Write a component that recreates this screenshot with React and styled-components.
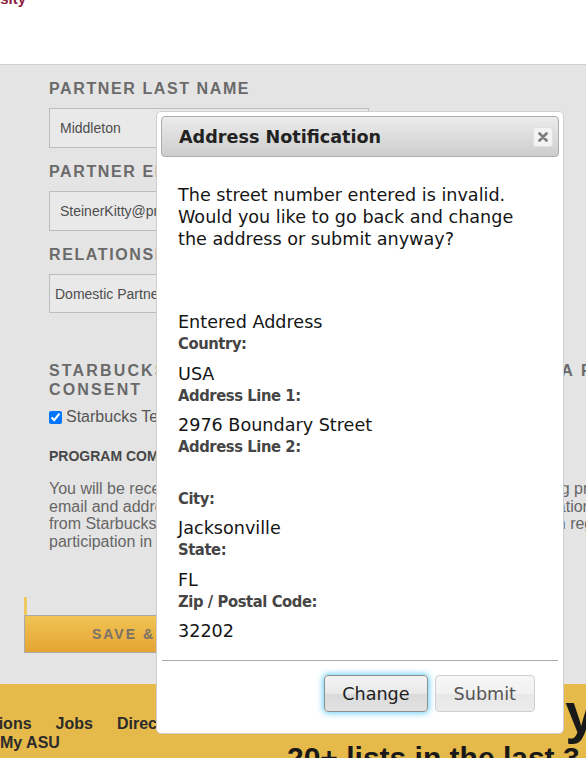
import React from "react";
import styled, { createGlobalStyle } from "styled-components";

const GlobalStyle = createGlobalStyle`
  html, body { margin: 0; padding: 0; background: #fff; overflow: hidden; }
  * { box-sizing: border-box; }
`;

const Page = styled.div`
  position: relative;
  width: 586px;
  height: 758px;
  overflow: hidden;
  font-family: "Liberation Sans", Arial, sans-serif;
`;

const Header = styled.header`
  height: 65px;
  background: #fff;
  border-bottom: 1px solid #cfcfcf;
`;

const Logo = styled.div`
  display: flex;
  justify-content: flex-end;
  width: 26px;
  height: 7px;
  overflow: hidden;
  color: #8c1d40;
  font: bold 15px/15px "Liberation Sans", Arial, sans-serif;
  white-space: nowrap;

  span {
    margin-top: -9px;
  }
`;

const Main = styled.main`
  height: 619px;
  background: #e4e4e4;
  padding-top: 14px;
`;

const Form = styled.div`
  width: 760px;
  margin-left: 49px;
`;

const Field = styled.div`
  display: flex;
  flex-direction: column;
  gap: 9px;
  margin-bottom: 14px;
`;

const FieldLabel = styled.div`
  max-width: ${(p) => p.$max || 700}px;
  font-size: 16px;
  font-weight: bold;
  line-height: ${(p) => p.$lh || 20}px;
  letter-spacing: ${(p) => p.$ls || 1.6}px;
  color: #6a6a6a;
  text-transform: uppercase;
`;

const TextInput = styled.input`
  width: 320px;
  height: 40px;
  margin: 0;
  padding: 0 10px;
  border: 1px solid #bdbdbd;
  background: #e9e9e9;
  font: 14px "Liberation Sans", Arial, sans-serif;
  color: #4d4d4d;
  outline: none;
`;

const SelectBox = styled.select`
  appearance: none;
  width: 320px;
  height: 39px;
  margin: 0;
  padding: 0 5px;
  border: 1px solid #bdbdbd;
  background: #e9e9e9;
  font: 14px "Liberation Sans", Arial, sans-serif;
  color: #4d4d4d;
`;

const Consent = styled.section`
  margin-top: 48px;
`;

const CheckRow = styled.label`
  display: flex;
  align-items: center;
  gap: 4px;
  margin-top: 8px;
  font-size: 16px;
  line-height: 20px;
  color: #555;
  white-space: nowrap;

  input {
    width: 13px;
    height: 13px;
    margin: 0;
  }
`;

const SubHead = styled.div`
  margin-top: 20px;
  font-size: 14px;
  font-weight: bold;
  line-height: 18px;
  color: #474747;
`;

const Para = styled.p`
  margin: 15px 0 0;
  font-size: 16px;
  line-height: 17.5px;
  color: #666;
  white-space: nowrap;
`;

const Actions = styled.div`
  margin: 47px 0 0 24px;
`;

const SaveAccent = styled.div`
  width: 3px;
  height: 18px;
  background: #efc862;
`;

const SaveButton = styled.button`
  display: block;
  width: 300px;
  height: 38px;
  margin: 0;
  border: 1px solid #a9a9a9;
  background: linear-gradient(#f0c453, #e5a434);
  font: bold 14px "Liberation Sans", Arial, sans-serif;
  letter-spacing: 2px;
  color: #7a7268;
  text-indent: -6px;
`;

const Footer = styled.footer`
  display: flex;
  height: 74px;
  background: #e6ba4a;
  overflow: hidden;
`;

const FooterNav = styled.nav`
  flex: none;
  width: 287px;
  padding-top: 30px;
`;

const NavLine = styled.div`
  display: flex;
  gap: 24px;
  margin-left: ${(p) => p.$shift || 0}px;
  font-size: 16px;
  font-weight: bold;
  line-height: 19px;
  color: #2b2b2b;
  white-space: nowrap;
`;

const Promo = styled.div`
  flex: none;
  white-space: nowrap;
  color: #191919;
  font-weight: bold;
`;

const PromoHead = styled.div`
  font-size: 56px;
  line-height: 58px;
  letter-spacing: -1.5px;
  word-spacing: -4px;
`;

const PromoSub = styled.div`
  font-size: 30px;
  line-height: 32px;
`;

const Modal = styled.div`
  position: absolute;
  left: 156px;
  top: 111px;
  width: 408px;
  height: 623px;
  display: flex;
  flex-direction: column;
  padding: 4px 4px 3px 4px;
  background: #fff;
  border: 1px solid #cfcfcf;
  border-radius: 5px;
  font-family: "DejaVu Sans", Verdana, sans-serif;
`;

const TitleBar = styled.div`
  display: flex;
  align-items: center;
  justify-content: space-between;
  height: 41px;
  padding: 0 5px 0 17px;
  border: 1px solid #acacac;
  border-radius: 4px;
  background: linear-gradient(#ececec, #cdcdcd);
`;

const Title = styled.h2`
  margin: 0;
  font-size: 17.6px;
  font-weight: bold;
  color: #222;
`;

const CloseButton = styled.button`
  display: flex;
  align-items: center;
  justify-content: center;
  width: 20px;
  height: 20px;
  padding: 0;
  border: 1px solid #e0e0e0;
  border-radius: 3px;
  background: #f3f3f3;
`;

const Body = styled.div`
  flex: 1;
  padding: 27px 17px 0 17px;
  font-size: 17.6px;
  line-height: 22px;
  color: #151515;
`;

const Message = styled.p`
  margin: 0 0 61px;
`;

const Heading = styled.div``;

const Label = styled.div`
  font-family: "DejaVu Sans Condensed", "DejaVu Sans", sans-serif;
  font-stretch: condensed;
  font-size: 16.4px;
  font-weight: bold;
  letter-spacing: -0.4px;
  color: #454545;
`;

const Value = styled.div`
  margin-top: 7.5px;
  min-height: 22px;
`;

const Divider = styled.hr`
  margin: 0 1px;
  border: none;
  border-top: 1px solid #ababab;
`;

const ButtonRow = styled.div`
  display: flex;
  justify-content: flex-end;
  gap: 7px;
  padding: 14px 24px 18px 0;
`;

const DialogButton = styled.button`
  height: 37px;
  padding: 0 ${(p) => (p.$primary ? 17 : 18)}px;
  border-radius: 4px;
  font: 17.6px "DejaVu Sans", Verdana, sans-serif;
  border: 1px solid ${(p) => (p.$primary ? "#8e8e8e" : "#d0d0d0")};
  color: ${(p) => (p.$primary ? "#1e1e1e" : "#555")};
  background: ${(p) =>
    p.$primary
      ? "linear-gradient(#f3f3f3 0%, #e9e9e9 50%, #dadada 51%, #e2e2e2 100%)"
      : "linear-gradient(#f7f7f7 0%, #f1f1f1 50%, #e7e7e7 51%, #ececec 100%)"};
  box-shadow: ${(p) => (p.$primary ? "0 0 6px 1px #62cdf6" : "none")};
`;

const fields = [
  { label: "Country:", value: "USA" },
  { label: "Address Line 1:", value: "2976 Boundary Street" },
  { label: "Address Line 2:", value: "" },
  { label: "City:", value: "Jacksonville" },
  { label: "State:", value: "FL" },
  { label: "Zip / Postal Code:", value: "32202" },
];

export default function App() {
  return (
    <Page>
      <GlobalStyle />
      <Header>
        <Logo>
          <span>Arizona State University</span>
        </Logo>
      </Header>

      <Main>
        <Form>
          <Field>
            <FieldLabel>Partner Last Name</FieldLabel>
            <TextInput defaultValue="Middleton" readOnly />
          </Field>
          <Field>
            <FieldLabel>Partner Email</FieldLabel>
            <TextInput defaultValue="SteinerKitty@protonmail.com" readOnly />
          </Field>
          <Field>
            <FieldLabel>Relationship</FieldLabel>
            <SelectBox defaultValue="dp">
              <option value="dp">Domestic Partner</option>
            </SelectBox>
          </Field>

          <Consent>
            <FieldLabel $lh={19} $max={690} $ls={2.15}>
              Starbucks College Achievement Plan ASU Data Release Consent
            </FieldLabel>
            <CheckRow>
              <input type="checkbox" defaultChecked />
              Starbucks Terms and Conditions
            </CheckRow>
            <SubHead>PROGRAM COMMUNICATIONS</SubHead>
            <Para>
              You will be receiving communications from Starbucks and ASU, regarding program
              <br />
              email and address updates, reminders and all important program information and notifications
              <br />
              from Starbucks and Arizona State University teams, including information regarding your
              <br />
              participation in the Starbucks College Achievement Plan.
            </Para>
          </Consent>
        </Form>

        <Actions>
          <SaveAccent />
          <SaveButton>SAVE &amp; CONTINUE</SaveButton>
        </Actions>
      </Main>

      <Footer>
        <FooterNav>
          <NavLine $shift={-44}>
            <span>Locations</span>
            <span>Jobs</span>
            <span>Directory</span>
          </NavLine>
          <NavLine>
            <span>My ASU</span>
          </NavLine>
        </FooterNav>
        <Promo>
          <PromoHead>Innovation year after year</PromoHead>
          <PromoSub>20+ lists in the last 3 years</PromoSub>
        </Promo>
      </Footer>

      <Modal role="dialog">
        <TitleBar>
          <Title>Address Notification</Title>
          <CloseButton aria-label="close">
            <svg width="10" height="10" viewBox="0 0 10 10">
              <path
                d="M1.5 1.5 L8.5 8.5 M8.5 1.5 L1.5 8.5"
                stroke="#7b7b7b"
                strokeWidth="2.6"
                strokeLinecap="round"
              />
            </svg>
          </CloseButton>
        </TitleBar>

        <Body>
          <Message>
            The street number entered is invalid. Would you like to go back
            and change the address or submit anyway?
          </Message>
          <Heading>Entered Address</Heading>
          {fields.map((f) => (
            <React.Fragment key={f.label}>
              <Label>{f.label}</Label>
              <Value>{f.value}</Value>
            </React.Fragment>
          ))}
        </Body>

        <Divider />
        <ButtonRow>
          <DialogButton $primary>Change</DialogButton>
          <DialogButton>Submit</DialogButton>
        </ButtonRow>
      </Modal>
    </Page>
  );
}
